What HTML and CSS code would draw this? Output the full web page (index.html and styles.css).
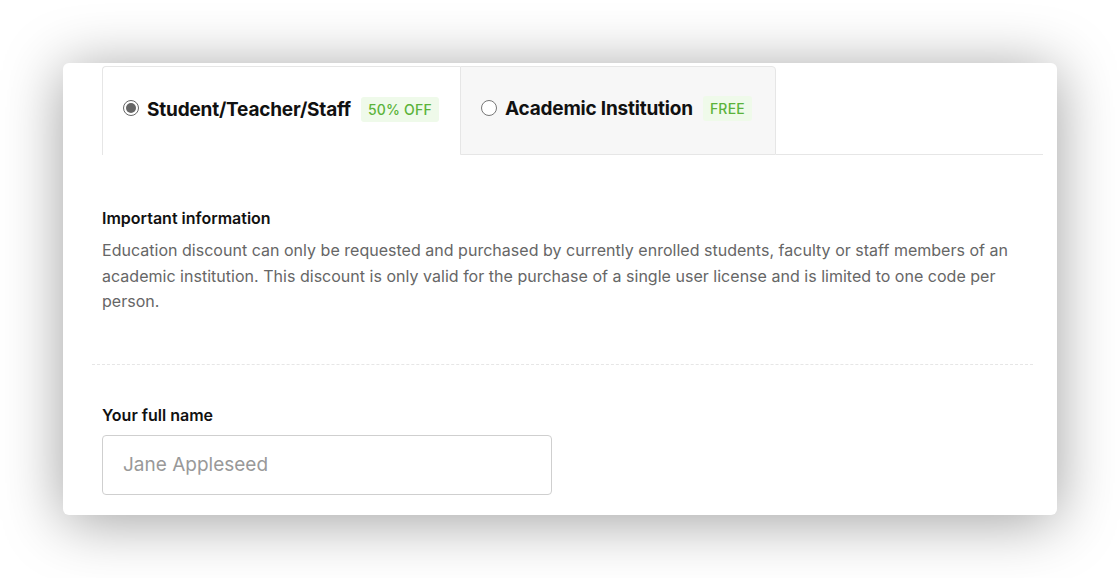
FILE: index.html
```html
<!DOCTYPE html>
<html>
<head>
<meta charset="utf-8">
<link rel="stylesheet" href="styles.css">
</head>
<body>
<div class="card">
  <div class="tabs">
    <div class="tab active">
      <span class="radio checked"></span>
      <span class="tab-label">Student/Teacher/Staff</span>
      <span class="badge">50% OFF</span>
    </div>
    <div class="tab">
      <span class="radio"></span>
      <span class="tab-label">Academic Institution</span>
      <span class="badge">FREE</span>
    </div>
    <div class="tab-rest"></div>
  </div>
  <div class="info">
    <h3 class="info-title">Important information</h3>
    <p class="info-text">Education discount can only be requested and purchased by currently enrolled students, faculty or staff members of an academic institution. This discount is only valid for the purchase of a single user license and is limited to one code per person.</p>
  </div>
  <hr class="divider">
  <div class="field">
    <label class="field-label">Your full name</label>
    <input class="field-input" type="text" placeholder="Jane Appleseed">
  </div>
</div>
</body>
</html>
```
FILE: styles.css
```css
html, body {
  margin: 0;
  padding: 0;
  background: #fff;
  font-family: Inter, "Open Sans", sans-serif;
}
body {
  padding: 63px 63px 0 63px;
  height: 578px;
  box-sizing: border-box;
  overflow: hidden;
}
.card {
  width: 994px;
  height: 452px;
  background: #fff;
  border-radius: 6px;
  box-shadow: 0 6px 60px rgba(0,0,0,0.38);
  box-sizing: border-box;
  padding: 3px 14px 0 39px;
  overflow: hidden;
}
.tabs {
  display: flex;
  height: 89px;
}
.tab {
  display: flex;
  align-items: center;
  box-sizing: border-box;
  height: 89px;
  padding: 0 20px 4px 20px;
  border: 1px solid #e6e6e6;
  background: #f7f7f7;
  border-top-right-radius: 4px;
}
.tab.active {
  width: 358px;
  background: #fff;
  border-right: none;
  border-bottom: none;
  border-top-right-radius: 0;
  border-top-left-radius: 4px;
}
.tab:not(.active) {
  width: 316px;
}
.tab-rest {
  flex: 1;
  border-bottom: 1px solid #e6e6e6;
}
.radio {
  width: 16px;
  height: 16px;
  border: 1px solid #777;
  border-radius: 50%;
  background: #fff;
  box-sizing: border-box;
  margin-right: 8px;
  flex: none;
  margin-top: -2px;
  position: relative;
}
.radio.checked {
  border-color: #666;
}
.radio.checked::after {
  content: "";
  position: absolute;
  left: 2px;
  top: 2px;
  width: 10px;
  height: 10px;
  border-radius: 50%;
  background: #666;
}
.tab-label {
  font-size: 19px;
  font-weight: 700;
  color: #111;
  letter-spacing: -0.2px;
  margin-right: 10px;
}
.badge {
  font-size: 14px;
  font-weight: 500;
  color: #5bb33a;
  background: #effaea;
  border-radius: 3px;
  padding: 4px 7px;
  letter-spacing: 0.2px;
}
.info {
  padding-top: 51px;
  width: 921px;
}
.info-title {
  margin: 0;
  font-size: 16px;
  font-weight: 600;
  line-height: 24px;
  color: #111;
}
.info-text {
  margin: 8px 0 0;
  font-size: 16px;
  line-height: 25.5px;
  color: #666;
  letter-spacing: 0.02px;
}
.divider {
  border: none;
  border-top: 1px dashed #e6e6e6;
  margin: 49px 0 0 -10px;
  width: 941px;
}
.field {
  padding-top: 38px;
}
.field-label {
  display: block;
  font-size: 16px;
  font-weight: 600;
  line-height: 24px;
  color: #111;
  margin-bottom: 8px;
}
.field-input {
  display: block;
  width: 450px;
  height: 60px;
  box-sizing: border-box;
  border: 1px solid #cfcfcf;
  border-radius: 4px;
  padding: 0 20px;
  font-family: inherit;
  font-size: 19px;
  color: #333;
  outline: none;
}
.field-input::placeholder {
  color: #999;
}
```
